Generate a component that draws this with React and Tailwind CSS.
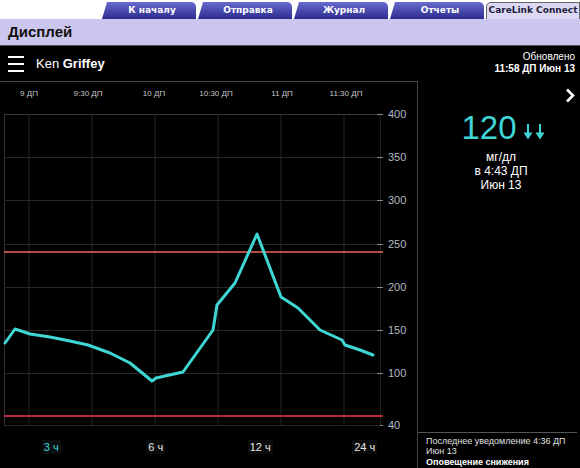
import React from 'react';

const tabs = ['К началу', 'Отправка', 'Журнал', 'Отчеты'];

const glucose = [
  [5, 261], [15, 247], [27, 251], [30, 252], [50, 255], [70, 259], [88, 263],
  [110, 271], [130, 281], [152, 299], [156, 296], [183, 290], [213, 248],
  [217, 223], [235, 201], [257, 152], [281, 215], [298, 226], [320, 248],
  [342, 258], [345, 263], [360, 268], [373, 273],
];

const yLabels = [
  ['400', 32], ['350', 75], ['300', 118], ['250', 162], ['200', 205],
  ['150', 248], ['100', 291], ['40', 343],
];

const times = [
  ['9 ДП', 29], ['9:30 ДП', 88], ['10 ДП', 154], ['10:30 ДП', 216],
  ['11 ДП', 282], ['11:30 ДП', 346],
];

const vLines = [29, 92, 155, 218, 281, 344];

function Chart() {
  return (
    <svg width="417" height="350" className="block">
      {times.map(([t, x]) => (
        <text key={t} x={x} y="12" fill="#c8c8c8" fontSize="8" textAnchor="middle" dominantBaseline="middle">
          {t}
        </text>
      ))}
      {vLines.map((x) => (
        <line key={x} x1={x} y1="32" x2={x} y2="343" stroke="#272727" strokeWidth="1" />
      ))}
      <line x1="4.5" y1="32" x2="4.5" y2="343" stroke="#333" strokeWidth="1" />
      <line x1="380.5" y1="32" x2="380.5" y2="343" stroke="#1e1e1e" strokeWidth="1" />
      {yLabels.map(([l, y]) => (
        <g key={l}>
          {l !== '40' && (
            <line x1="4" y1={y + 0.5} x2="377" y2={y + 0.5} stroke={l === '400' ? '#383838' : '#272727'} strokeWidth="1" />
          )}
          <line x1="377" y1={y + 0.5} x2="383" y2={y + 0.5} stroke="#8a8a8a" strokeWidth="1" />
          <text x="388" y={y + 1} fill="#b4b8c4" fontSize="11" dominantBaseline="middle">
            {l}
          </text>
        </g>
      ))}
      <line x1="4" y1="343.5" x2="380" y2="343.5" stroke="#262626" strokeWidth="1" />
      <line x1="4" y1="170" x2="383" y2="170" stroke="#ec6a56" strokeWidth="1.5" />
      <line x1="4" y1="334" x2="383" y2="334" stroke="#b82a40" strokeWidth="2" />
      <polyline
        points={glucose.map((p) => p.join(',')).join(' ')}
        fill="none"
        stroke="#3fd6d6"
        strokeWidth="3"
        strokeLinejoin="round"
        strokeLinecap="round"
      />
    </svg>
  );
}

export default function App() {
  return (
    <div className="w-[580px] h-[468px] overflow-hidden bg-white font-['Liberation_Sans',Arial,sans-serif]">
      {/* tabs */}
      <div className="h-[19px] pt-[2px] flex justify-end gap-[2px]">
        {tabs.map((t) => (
          <div
            key={t}
            className="w-[94px] h-[17px] flex items-center justify-center rounded-t-[5px] bg-linear-to-b from-[#6a6ad0] to-[#2c2c8c] text-white text-[9px] font-bold font-['DejaVu_Sans',sans-serif] [clip-path:polygon(5px_0,100%_0,100%_100%,0_100%)]"
          >
            <span className="pl-[6px]">{t}</span>
          </div>
        ))}
        <div className="w-[94px] h-[17px] flex items-center justify-center rounded-tl-[5px] bg-[#dcd8f4] border-t border-l border-r border-[#666] text-[#1c1c3c] text-[9px] font-bold font-['DejaVu_Sans',sans-serif]">
          CareLink Connect
        </div>
      </div>

      {/* title bar */}
      <div className="h-[27px] bg-[#cbc6ee] border-b border-[#555] flex items-center px-[8px]">
        <span className="text-[15px] font-bold text-[#111]">Дисплей</span>
      </div>

      <div className="bg-black h-[422px] flex flex-col">
        {/* header row */}
        <div className="h-[35px] flex items-center justify-between pl-[8px] pr-[5px]">
          <div className="flex items-center gap-[12px]">
            <div className="flex flex-col gap-[5px] w-[16px]">
              <div className="h-[2px] bg-white" />
              <div className="h-[2px] bg-white" />
              <div className="h-[2px] bg-white" />
            </div>
            <span className="text-[13px] text-white">
              Ken <span className="font-bold">Griffey</span>
            </span>
          </div>
          <div className="text-right text-white text-[10px] leading-[12px] pb-[2px]">
            <div>Обновлено</div>
            <div className="font-bold">11:58 ДП Июн 13</div>
          </div>
        </div>

        <div className="flex flex-1">
          {/* chart panel */}
          <div className="w-[418px] border-t border-r border-[#444] flex flex-col">
            <Chart />
            <div className="flex -ml-[1px] pt-[8px] text-[11px] leading-[14px]">
              <div className="w-[105px] flex justify-center">
                <span className="px-[2px] bg-[#0b0f0f] text-[#3fd6d6]">3 ч</span>
              </div>
              <div className="w-[105px] flex justify-center">
                <span className="px-[2px] bg-[#0b0b0b] text-[#e8e8e8]">6 ч</span>
              </div>
              <div className="w-[105px] flex justify-center">
                <span className="px-[2px] bg-[#0b0b0b] text-[#e8e8e8]">12 ч</span>
              </div>
              <div className="w-[105px] flex justify-center">
                <span className="px-[2px] bg-[#0b0b0b] text-[#e8e8e8]">24 ч</span>
              </div>
            </div>
          </div>

          {/* reading panel */}
          <div className="flex-1 flex flex-col">
            <div className="flex justify-end pt-[7px] pr-[5px]">
              <svg width="10" height="15" viewBox="0 0 10 15">
                <path d="M2 1.5 L8 7.5 L2 13.5" fill="none" stroke="white" strokeWidth="2.6" />
              </svg>
            </div>
            <div className="flex justify-center items-end gap-[6px] mt-[8px] pl-[8px]">
              <span className="text-[33px] leading-[33px] text-[#3fd6d6]">120</span>
              <svg width="22" height="16" viewBox="0 0 22 16" className="mb-[4px]">
                <path d="M5 0 V9" stroke="#3fd6d6" strokeWidth="2" />
                <path d="M0.5 8.5 H9.5 L5 15.5 Z" fill="#3fd6d6" />
                <path d="M17 0 V9" stroke="#3fd6d6" strokeWidth="2" />
                <path d="M12.5 8.5 H21.5 L17 15.5 Z" fill="#3fd6d6" />
              </svg>
            </div>
            <div className="mt-[6px] text-center text-white text-[12px] leading-[14px] pl-[4px]">
              <div>мг/дл</div>
              <div>в 4:43 ДП</div>
              <div>Июн 13</div>
            </div>
            <div className="mt-auto mr-[3px] border-t border-[#555] pl-[8px] pt-[3px] pb-[1px] text-[9px] leading-[10.5px] text-[#e0e0e0]">
              <div>Последнее уведомление 4:36 ДП</div>
              <div>Июн 13</div>
              <div className="font-bold text-white">Оповещение снижения</div>
            </div>
          </div>
        </div>
      </div>
    </div>
  );
}
